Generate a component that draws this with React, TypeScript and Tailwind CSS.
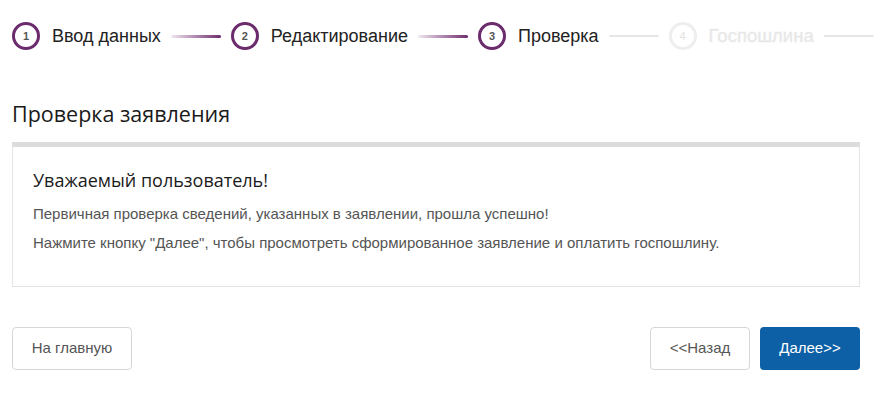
import React from "react";

type Step = { n: number; label: string; state: "done" | "active" | "todo" };

const steps: Step[] = [
  { n: 1, label: "Ввод данных", state: "done" },
  { n: 2, label: "Редактирование", state: "done" },
  { n: 3, label: "Проверка", state: "active" },
  { n: 4, label: "Госпошлина", state: "todo" },
];

function Connector({ filled }: { filled: boolean }) {
  return (
    <div
      className={
        filled
          ? "h-[3px] w-[50px] rounded-full bg-gradient-to-r from-[#efe8ef] to-[#6e2c6f]"
          : "h-[2px] w-[50px] rounded-full bg-[#e6e6e6]"
      }
    />
  );
}

function Stepper() {
  return (
    <div className="flex h-[72px] items-center whitespace-nowrap pl-3 font-['Liberation_Sans',sans-serif]">
      {steps.map((s) => {
        const todo = s.state === "todo";
        return (
          <div key={s.n} className="flex shrink-0 items-center">
            <div
              className={
                todo
                  ? "flex h-[28px] w-[28px] items-center justify-center rounded-full border-[3px] border-[#eeeeee] text-[11px] text-[#e2e2e2]"
                  : "flex h-[28px] w-[28px] items-center justify-center rounded-full border-[3px] border-[#6b2b6d] text-[11px] font-bold text-[#555]"
              }
            >
              {s.n}
            </div>
            <span
              className={
                todo
                  ? "ml-[12px] text-[18.5px] text-[#e6e6e6] [-webkit-text-stroke:0.5px_#ececec]"
                  : "ml-[12px] text-[18px] text-[#222]"
              }
            >
              {s.label}
            </span>
            <div className="mx-[10px]">
              <Connector filled={s.state === "done"} />
            </div>
          </div>
        );
      })}
    </div>
  );
}

export default function App() {
  return (
    <div className="h-[416px] w-[880px] bg-white">
      <Stepper />
      <div className="px-3">
        <h1 className="mt-[28px] font-['Open_Sans',sans-serif] text-[21.5px] leading-[28px] text-[#1a1a1a]">
          Проверка заявления
        </h1>
        <div className="mt-[14px] w-[848px] border border-t-[5px] border-[#e4e4e4] border-t-[#dcdcdc] px-[20px] pb-[35px] pt-[20px]">
          <h2 className="font-['Open_Sans',sans-serif] text-[18px] leading-[26px] text-[#1a1a1a]">
            Уважаемый пользователь!
          </h2>
          <div className="mt-[12px] space-y-[12px] font-['Liberation_Sans',sans-serif] text-[15px] leading-[17px] text-[#555]">
            <p>Первичная проверка сведений, указанных в заявлении, прошла успешно!</p>
            <p>
              Нажмите кнопку "Далее", чтобы просмотреть сформированное заявление и оплатить госпошлину.
            </p>
          </div>
        </div>
        <div className="mt-[40px] flex w-[848px] items-center font-['Liberation_Sans',sans-serif] text-[15px]">
          <button className="h-[43px] w-[120px] rounded-[4px] border border-[#d6d6d6] text-[#555]">
            На главную
          </button>
          <div className="ml-auto flex gap-[10px]">
            <button className="h-[43px] w-[100px] rounded-[4px] border border-[#d6d6d6] text-[#555]">
              &lt;&lt;Назад
            </button>
            <button className="h-[43px] w-[100px] rounded-[4px] bg-[#0d5fa6] text-white">
              Далее&gt;&gt;
            </button>
          </div>
        </div>
      </div>
    </div>
  );
}
